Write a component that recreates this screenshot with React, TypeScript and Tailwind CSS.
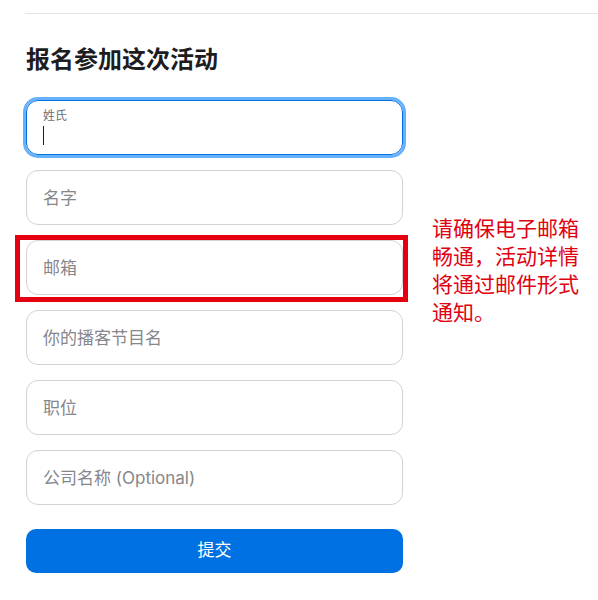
import React from 'react';

const fields = [
    { key: 'first', label: '姓氏', focused: true },
    { key: 'last', label: '名字' },
    { key: 'email', label: '邮箱', highlight: true },
    { key: 'podcast', label: '你的播客节目名' },
    { key: 'title', label: '职位' },
    { key: 'company', label: '公司名称 (Optional)' },
];

const noteLines = ['请确保电子邮箱', '畅通，活动详情', '将通过邮件形式', '通知。'];

function Field({ label, focused, highlight }: { label: string; focused?: boolean; highlight?: boolean }) {
    if (focused) {
        return (
            <div className="relative h-[55px]">
                <input
                    aria-label={label}
                    className="h-full w-full rounded-[12px] border border-[#0071e3] px-[16px] pt-[20px] text-[17px] text-[#1d1d1f] outline-none shadow-[0_0_0_3px_rgba(0,125,250,0.6)]"
                />
                {/* floating label */}
                <span className="pointer-events-none absolute left-[17px] top-[8px] text-[12px] leading-[16px] text-[#6e6e73]">
                    {label}
                </span>
                {/* caret */}
                <span className="absolute left-[17px] top-[26px] h-[19px] w-px bg-[#1d1d1f]" />
            </div>
        );
    }

    return (
        <div className="relative h-[55px]">
            <input
                placeholder={label}
                className="h-full w-full rounded-[12px] border border-[#d2d2d7] bg-white px-[16px] text-[17px] text-[#1d1d1f] outline-none placeholder:text-[#86868b]"
            />
            {/* annotation box */}
            {highlight && (
                <div className="pointer-events-none absolute -left-[11px] -right-[5px] -top-[5px] -bottom-[7px] border-[5px] border-[#e5000f]" />
            )}
        </div>
    );
}

export default function App() {
    return (
        <div
            className="min-h-[600px] bg-white pt-[13px]"
            style={{ fontFamily: 'Inter, "Noto Sans CJK SC", sans-serif' }}
        >
            <div className="ml-[25px] border-t border-[#e5e5e5]" />

            <div className="pl-[26px]">
                <h1 className="mt-[30px] text-[24px] font-bold leading-[32px] text-[#1d1d1f]">
                    报名参加这次活动
                </h1>

                <div className="mt-[24px] flex items-start">
                    <form className="flex w-[377px] flex-col gap-[15px]" onSubmit={(e) => e.preventDefault()}>
                        {fields.map((f) => (
                            <Field key={f.key} label={f.label} focused={f.focused} highlight={f.highlight} />
                        ))}
                        <button
                            type="submit"
                            className="mt-[9px] h-[44px] w-full rounded-[10px] bg-[#0071e3] text-[17px] text-white"
                        >
                            提交
                        </button>
                    </form>

                    <div className="ml-[29px] mt-[115px] text-[21px] leading-[28px] text-[#e0000f]">
                        {noteLines.map((line) => (
                            <div key={line}>{line}</div>
                        ))}
                    </div>
                </div>
            </div>
        </div>
    );
}
